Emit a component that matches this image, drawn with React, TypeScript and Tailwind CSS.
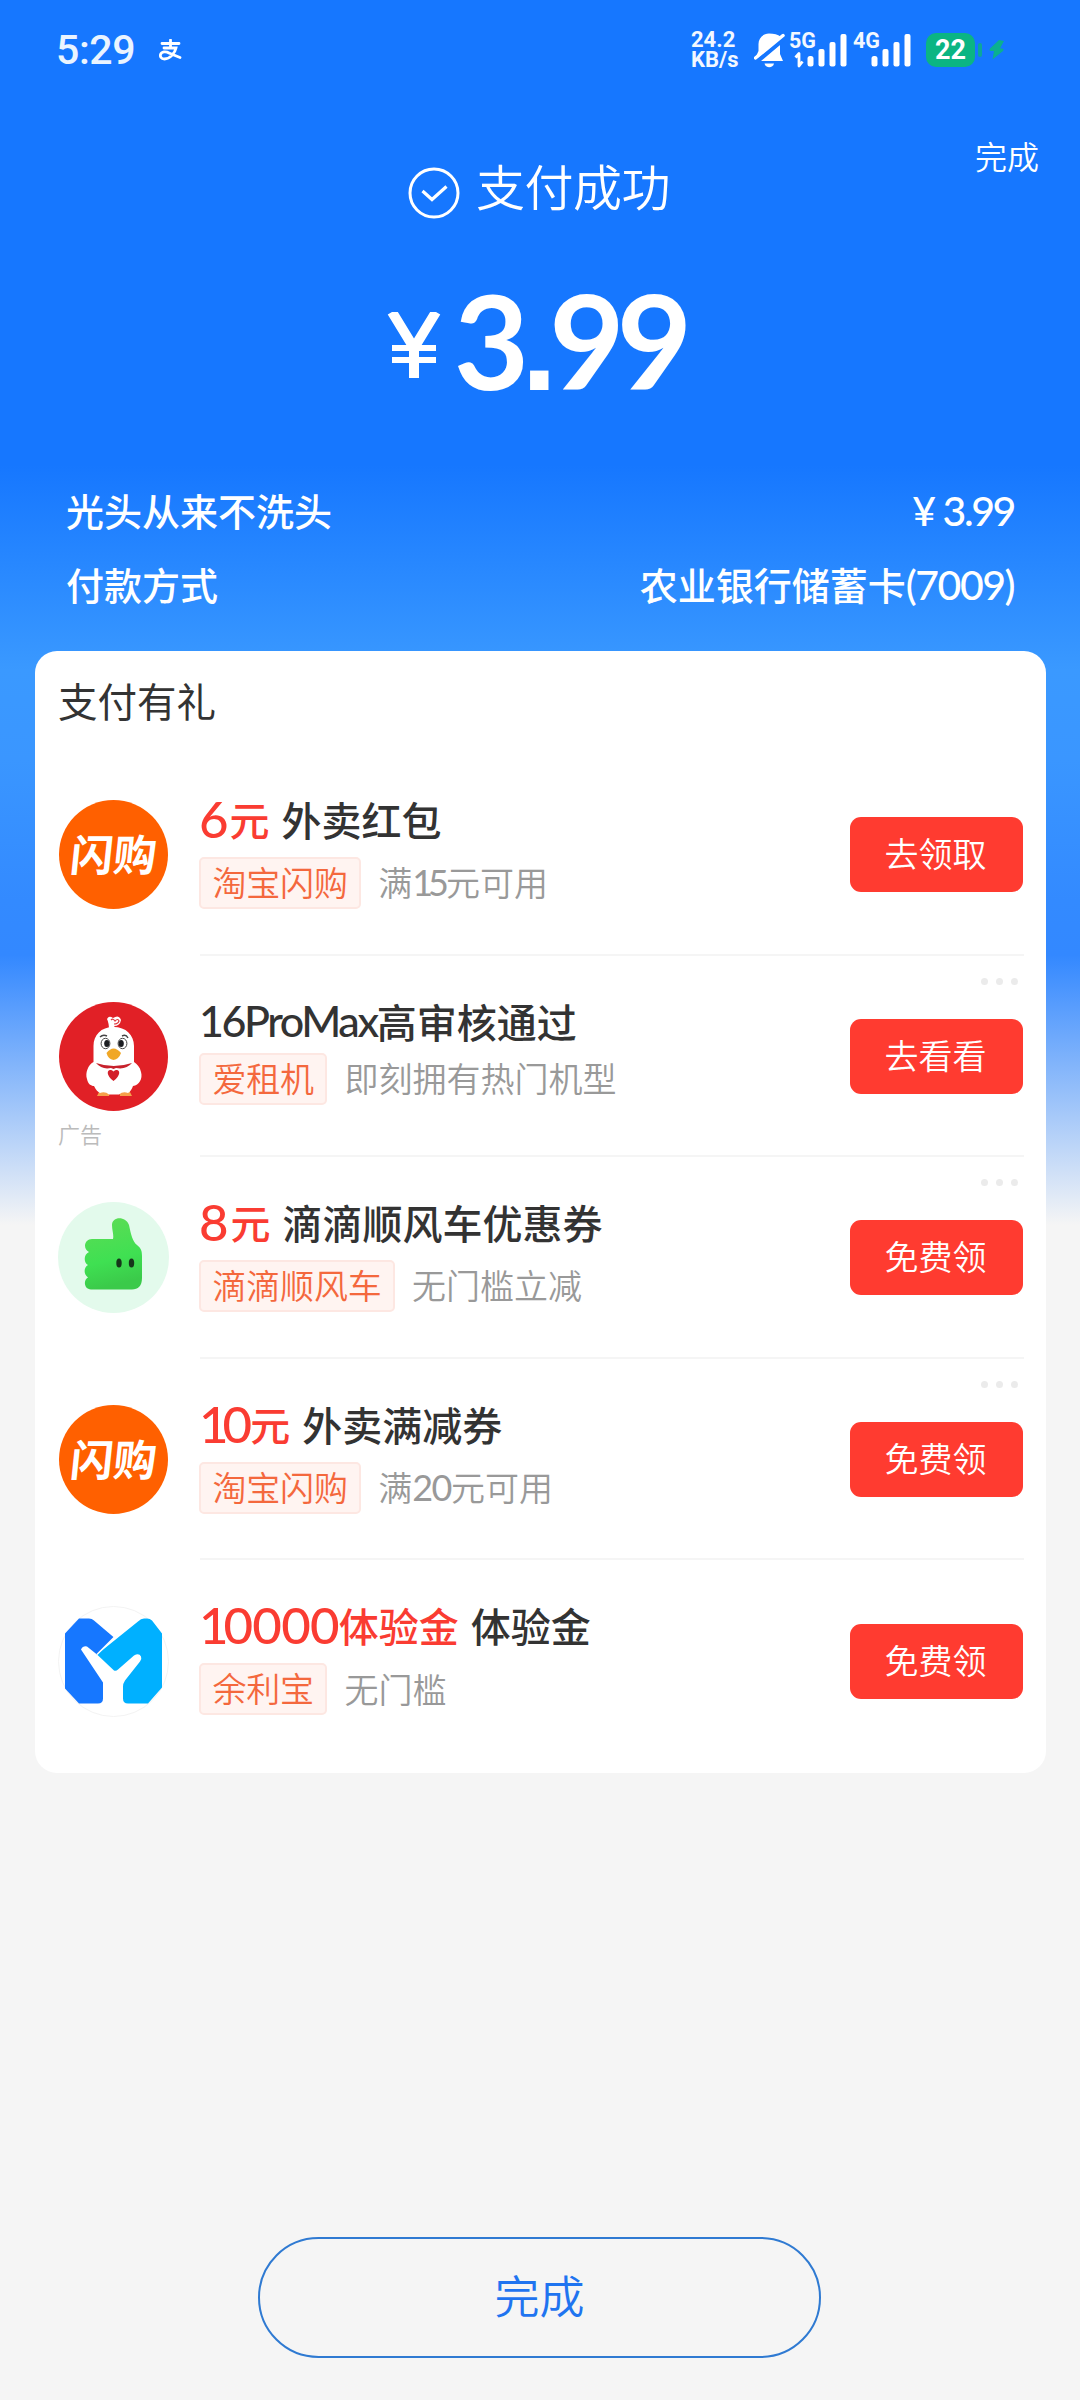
import React from 'react';

const DIGIT = "font-['Lato','Noto_Sans_CJK_SC',sans-serif]";

function StatusBar() {
  return (
    <div className="flex h-[100px] items-center justify-between pl-[56px] pr-[74px]">
      <div className="flex items-center gap-[24px] text-[#eaf4ff]">
        <span className="font-['Roboto'] text-[41px] font-medium leading-[40px] tracking-[-0.4px]">5:29</span>
        <svg width="24" height="22" viewBox="0 0 24 22" fill="none" stroke="#fff" strokeWidth="2.8" strokeLinecap="round">
          <path d="M3 4.500H20M11.500 1V9M5 9H17C16 14 11 20 5.500 20C2 20 1 17.500 1.500 15.500C2.500 12.500 7 12 10 14L21 18.500" />
        </svg>
      </div>
      <div className="flex items-center text-[#f2f8ff]">
        <div className="-ml-px flex w-[63px] flex-col font-['Roboto'] text-[22px] font-bold leading-[20px]">
          <span>24.2</span>
          <span>KB/s</span>
        </div>
        <svg width="31" height="36" viewBox="0 0 31 36">
          <path d="M15 1.500C8.500 1.500 4.500 6.500 4.500 12V19L2 24.500 26.500 4.500C24 2.500 20 1.500 15 1.500Z" fill="#fff" />
          <path d="M26 12V22L29 29H7L26 13Z" fill="#fff" />
          <path d="M1.500 26 29 3.500" stroke="#fff" strokeWidth="3.500" strokeLinecap="round" />
          <path d="M3 29 30 8" stroke="#1677ff" strokeWidth="2.500" />
          <path d="M10.500 31.500H20C19 36.500 11.500 36.500 10.500 31.500Z" fill="#fff" />
        </svg>
        <Signal label="5G" data />
        <Signal label="4G" />
        <div className="ml-[13px] flex h-[34px] w-[49px] items-center justify-center rounded-[10px] bg-[#0bb583] font-['Roboto'] text-[27px] font-bold text-white">22</div>
        <div className="ml-[3px] h-[14px] w-[4px] rounded-full bg-[#0ca79b]" />
        <svg className="ml-[6px]" width="18" height="22" viewBox="0 0 18 22">
          <path d="M11 1 2 9.500C1 11 1.500 12 3 12H6L4.500 20.500 15 12C16 11 15.500 9.500 14 9.500H12L16 2Z" fill="#0bb08f" />
        </svg>
      </div>
    </div>
  );
}

function Signal({ label, data }: { label: string; data?: boolean }) {
  return (
    <div className="relative ml-[5px] h-[36px] w-[59px]">
      <svg width="59" height="36" viewBox="0 0 59 36">
        {data && <path d="M5.500 25.500 9 21.500V34L12.500 29.500" fill="none" stroke="#fff" strokeWidth="2.800" strokeLinejoin="round" />}
        <g fill="#fff">
          <rect x="17.500" y="24" width="6" height="10.500" rx="2.500" />
          <rect x="28.500" y="17" width="6" height="17.500" rx="2" />
          <rect x="39.500" y="10" width="6" height="24.500" rx="2" />
          <rect x="50.500" y="2" width="6" height="32.500" rx="2" />
        </g>
      </svg>
      <span className="absolute left-[-1px] top-[-4px] font-['Roboto'] text-[21.500px] font-bold leading-[25px]">{label}</span>
    </div>
  );
}

function FlashLogo() {
  return (
    <div className="flex size-[109px] items-center justify-center rounded-full bg-[#ff6000]">
      <span className="mt-[-5px] -skew-x-6 text-[43px] font-bold leading-none text-white">闪购</span>
    </div>
  );
}

function ChickenLogo() {
  return (
    <svg width="109" height="109" viewBox="0 0 109 109">
      <circle cx="54.500" cy="54.500" r="54.500" fill="#e12026" />
      <path d="M50 28Q50 21 48 17Q50 13 54 16Q60 12 62 18Q61 24 55 24L58 28Z" fill="#fff" />
      <path d="M52 18Q54 16 56 19Q59 16 60 19Q59 22 55 22" fill="none" stroke="#e0393e" strokeWidth="1.200" />
      <path d="M38 94 41 88H51L50 94ZM61 94 60 88H70L73 94Z" fill="#f6a04a" />
      <path d="M54.500 25C42 25 34.500 33 34.500 44V60C29 63 26 71 28 77C29 82 32 84 35 84C37 88 39 90 41 91Q46 89 50 92.500H60Q64 89 69 91C71 90 73 87 74 84C80 83 84 77 82 70C81 65 78 62 75 60V44C75 33 67 25 54.500 25Z" fill="#fff" />
      <path d="M41 35Q44 32 48 34M63 34Q67 32 69 36" fill="none" stroke="#444" strokeWidth="1.400" />
      <ellipse cx="46.500" cy="41.500" rx="4.400" ry="5.200" fill="#fff" stroke="#333" strokeWidth="0.900" />
      <ellipse cx="63.500" cy="41.500" rx="4.400" ry="5.200" fill="#fff" stroke="#333" strokeWidth="0.900" />
      <ellipse cx="47.800" cy="41.500" rx="2.600" ry="3.600" fill="#1c1e22" />
      <ellipse cx="62.200" cy="41.500" rx="2.600" ry="3.600" fill="#1c1e22" />
      <path d="M47.500 51Q54.500 42 62 51Q60 57 54.500 58Q49 57 47.500 51Z" fill="#f0a726" />
      <path d="M37 61Q54.500 67 73 61Q67 68 57 66L54.500 67 52 66Q43 68 37 61Z" fill="#c7222c" />
      <path d="M54.500 79C45 72 49 65 54.500 69.500C60 65 64 72 54.500 79Z" fill="#d3202b" />
    </svg>
  );
}

function ThumbLogo() {
  return (
    <svg width="111" height="111" viewBox="0 0 111 111">
      <defs>
        <linearGradient id="thumb" x1="0" y1="0" x2="0.200" y2="1">
          <stop offset="0" stopColor="#5edc55" />
          <stop offset="0.650" stopColor="#3fe052" />
          <stop offset="1" stopColor="#3bca4a" />
        </linearGradient>
      </defs>
      <circle cx="55.500" cy="55.500" r="55.500" fill="#e3faec" />
      <path d="M54 23C54 14 68 14 71 23C73 33 75 40 79 43C83 46 84 49 84 54V76C84 84 80 87.500 74 87.500H33C26 87.500 25 78 30 75.500C25 72 26 65 30 63C25 60 26 52 31 50C24 46 27 37 34 37H55C56 33 54 28 54 23Z" fill="url(#thumb)" />
      <ellipse cx="61" cy="61" rx="2.700" ry="4.500" fill="#16351a" />
      <ellipse cx="73.500" cy="61" rx="2.700" ry="4.500" fill="#16351a" />
    </svg>
  );
}

function YuLogo() {
  return (
    <svg width="111" height="111" viewBox="0 0 111 111">
      <circle cx="55.500" cy="55.500" r="55" fill="#fff" stroke="#f3f3f3" />
      <g transform="translate(-1 -0.500)">
        <path d="M22 13H32Q35 13 37 15L57 32 40 49 30 41Q26 40 24 44L46 77V93Q46 98 41 98H22L8 83V28Z" fill="#1677ff" />
        <path d="M90 13H87Q84 13 81 16L40 49 57 65Q59 66 61 64L77 50Q82 47 84 51Q85 53 83 56L68 75Q66 78 66 81V93Q66 98 71 98H91L105 82V28L95 15Q93 13 90 13Z" fill="#00b0ff" />
        <path d="M40 49 58 31" stroke="#fff" strokeWidth="1.500" />
      </g>
    </svg>
  );
}

interface Offer {
  logo: React.ReactNode;
  amount?: React.ReactNode;
  unit?: string;
  latin?: string;
  name: string;
  tag: string;
  desc: React.ReactNode;
  action: string;
  ad?: boolean;
  dots?: boolean;
}

const offers: Offer[] = [
  {
    logo: <FlashLogo />,
    amount: <span className="tracking-[1px]">6</span>,
    unit: '元',
    name: '外卖红包',
    tag: '淘宝闪购',
    desc: <>满<span className={`${DIGIT} text-[36px] font-normal leading-none tracking-[-5px]`}>1</span><span className={`${DIGIT} text-[36px] font-normal leading-none tracking-[-3px]`}>5</span>元可用</>,
    action: '去领取',
  },
  { logo: <ChickenLogo />, latin: '16ProMax', name: '高审核通过', tag: '爱租机', desc: '即刻拥有热门机型', action: '去看看', ad: true, dots: true },
  {
    logo: <ThumbLogo />,
    amount: <span className="tracking-[2px]">8</span>,
    unit: '元',
    name: '滴滴顺风车优惠券',
    tag: '滴滴顺风车',
    desc: '无门槛立减',
    action: '免费领',
    dots: true,
  },
  {
    logo: <FlashLogo />,
    amount: <><span className="tracking-[-6px]">1</span><span className="tracking-[-2px]">0</span></>,
    unit: '元',
    name: '外卖满减券',
    tag: '淘宝闪购',
    desc: <>满<span className={`${DIGIT} text-[36px] font-normal leading-none tracking-[-1.500px]`}>20</span>元可用</>,
    action: '免费领',
    dots: true,
  },
  {
    logo: <YuLogo />,
    amount: <><span className="tracking-[-5px]">1</span><span className="tracking-[-0.800px]">0000</span></>,
    unit: '体验金',
    name: '体验金',
    tag: '余利宝',
    desc: '无门槛',
    action: '免费领',
  },
];

function OfferRow({ offer, last }: { offer: Offer; last: boolean }) {
  return (
    <div className="relative flex h-[201.6px] items-center pl-[23px] pr-[23px]">
      <div className="flex w-[111px] shrink-0 justify-center">{offer.logo}</div>
      {offer.ad && <span className="absolute left-[23px] top-[163px] text-[22px] font-[350] leading-[28px] text-[#bbb]">广告</span>}
      <div className={`ml-[30px] flex flex-1 flex-col whitespace-nowrap ${offer.latin ? 'mb-[10px] gap-[9px]' : 'mb-[5px] gap-[15px]'}`}>
        <div className="flex h-[46px] items-center text-[40px] font-medium leading-[46px] text-[#333]">
          {offer.amount && (
            <span className="mr-[12px] flex items-center text-[#fa3c32]">
              <span className={`${DIGIT} text-[51px] font-medium`}>{offer.amount}</span>
              <span>{offer.unit}</span>
            </span>
          )}
          {offer.latin && <span className={`${DIGIT} text-[43px] tracking-[-2.400px]`}>{offer.latin}</span>}
          <span>{offer.name}</span>
        </div>
        <div className="flex items-center text-[34px] font-[350] leading-[45px]">
          <span className="h-[52px] rounded-[5px] border-2 border-[#fde7e2] bg-[#fff4f1] px-[11.500px] tracking-[-0.200px] text-[#f4683d]">{offer.tag}</span>
          <span className="ml-[17px] pb-[2px] text-[#999]">{offer.desc}</span>
        </div>
      </div>
      <button className="h-[75px] w-[173px] rounded-[11px] bg-[#ff3b30] pb-[4px] pr-[2px] text-[34px] font-[350] text-white">{offer.action}</button>
      {offer.dots && (
        <div className="absolute right-[28px] top-[22px] flex gap-[8px]">
          <i className="size-[7px] rounded-full bg-[#ebebeb]" />
          <i className="size-[7px] rounded-full bg-[#ebebeb]" />
          <i className="size-[7px] rounded-full bg-[#ebebeb]" />
        </div>
      )}
      {!last && <div className="absolute bottom-0 left-[165px] right-[22px] h-[2px] bg-[#f5f5f5]" />}
    </div>
  );
}

export default function App() {
  return (
    <div className="flex h-[2400px] w-[1080px] flex-col bg-[#f5f5f5] bg-[linear-gradient(180deg,#1677ff_0px,#1677ff_465px,#3a99ff_670px,#3a96ff_760px,#338aff_900px,#3388ff_955px,#f5f5f5_1225px)] font-['Noto_Sans_CJK_SC',sans-serif]">
      <StatusBar />
      <header className="relative flex h-[364px] flex-col items-center text-white">
        <span className="absolute right-[41px] top-[35px] text-[32px] font-[350] leading-[40px]">完成</span>
        <div className="mr-[2px] mt-[55px] flex h-[60px] items-center gap-[16px]">
          <svg className="mt-[16px]" width="52" height="52" viewBox="0 0 52 52" fill="none" stroke="#fff">
            <circle cx="26" cy="26" r="24" strokeWidth="3" />
            <path d="M14.500 24 24 32.500 38.500 19.500" strokeWidth="3.200" />
          </svg>
          <span className="text-[49px] font-[350] leading-[60px] tracking-[-0.500px]">支付成功</span>
        </div>
        <div className="mr-[9px] mt-[67px] flex h-[120px] items-center">
          <svg className="mr-[13px] mt-[6px]" width="54" height="66" viewBox="0 0 54 66" fill="none" stroke="#fff">
            <path d="M5 0 27 36 49 0M27 34V66" strokeWidth="10" />
            <path d="M5 36H49M5 48H49" strokeWidth="6" />
          </svg>
          <span className={`${DIGIT} text-[130px] font-bold leading-[120px] tracking-[-8px]`}>
            3<span className="font-['Liberation_Sans'] font-bold">.</span>99
          </span>
        </div>
      </header>
      <section className="flex flex-col pl-[66px] pr-[66px] pt-[9px] text-[38px] font-medium leading-[74px] text-white">
        <div className="flex h-[74px] justify-between">
          <span>光头从来不洗头</span>
          <span className={`${DIGIT} pt-[1px] text-[41px] tracking-[-2.400px] [word-spacing:1px]`}>¥ 3.99</span>
        </div>
        <div className="flex h-[74px] justify-between">
          <span>付款方式</span>
          <span>农业银行储蓄卡<span className={`${DIGIT} text-[41px] tracking-[-1.500px]`}>(7009)</span></span>
        </div>
      </section>
      <main className="mx-[35px] mt-[30px] flex h-[1122px] w-[1011px] shrink-0 flex-col rounded-[22px] bg-white">
        <h2 className="h-[103px] pl-[23px] pt-[19px] text-[39.500px] leading-[60px] text-[#333]">支付有礼</h2>
        {offers.map((o, i) => <OfferRow key={i} offer={o} last={i === offers.length - 1} />)}
      </main>
      <button className="ml-[258px] mt-[464px] h-[121px] w-[563px] shrink-0 rounded-full border-2 border-[#2f7ad2] pb-[5px] text-[45px] font-[350] text-[#1f74f0]">完成</button>
    </div>
  );
}
